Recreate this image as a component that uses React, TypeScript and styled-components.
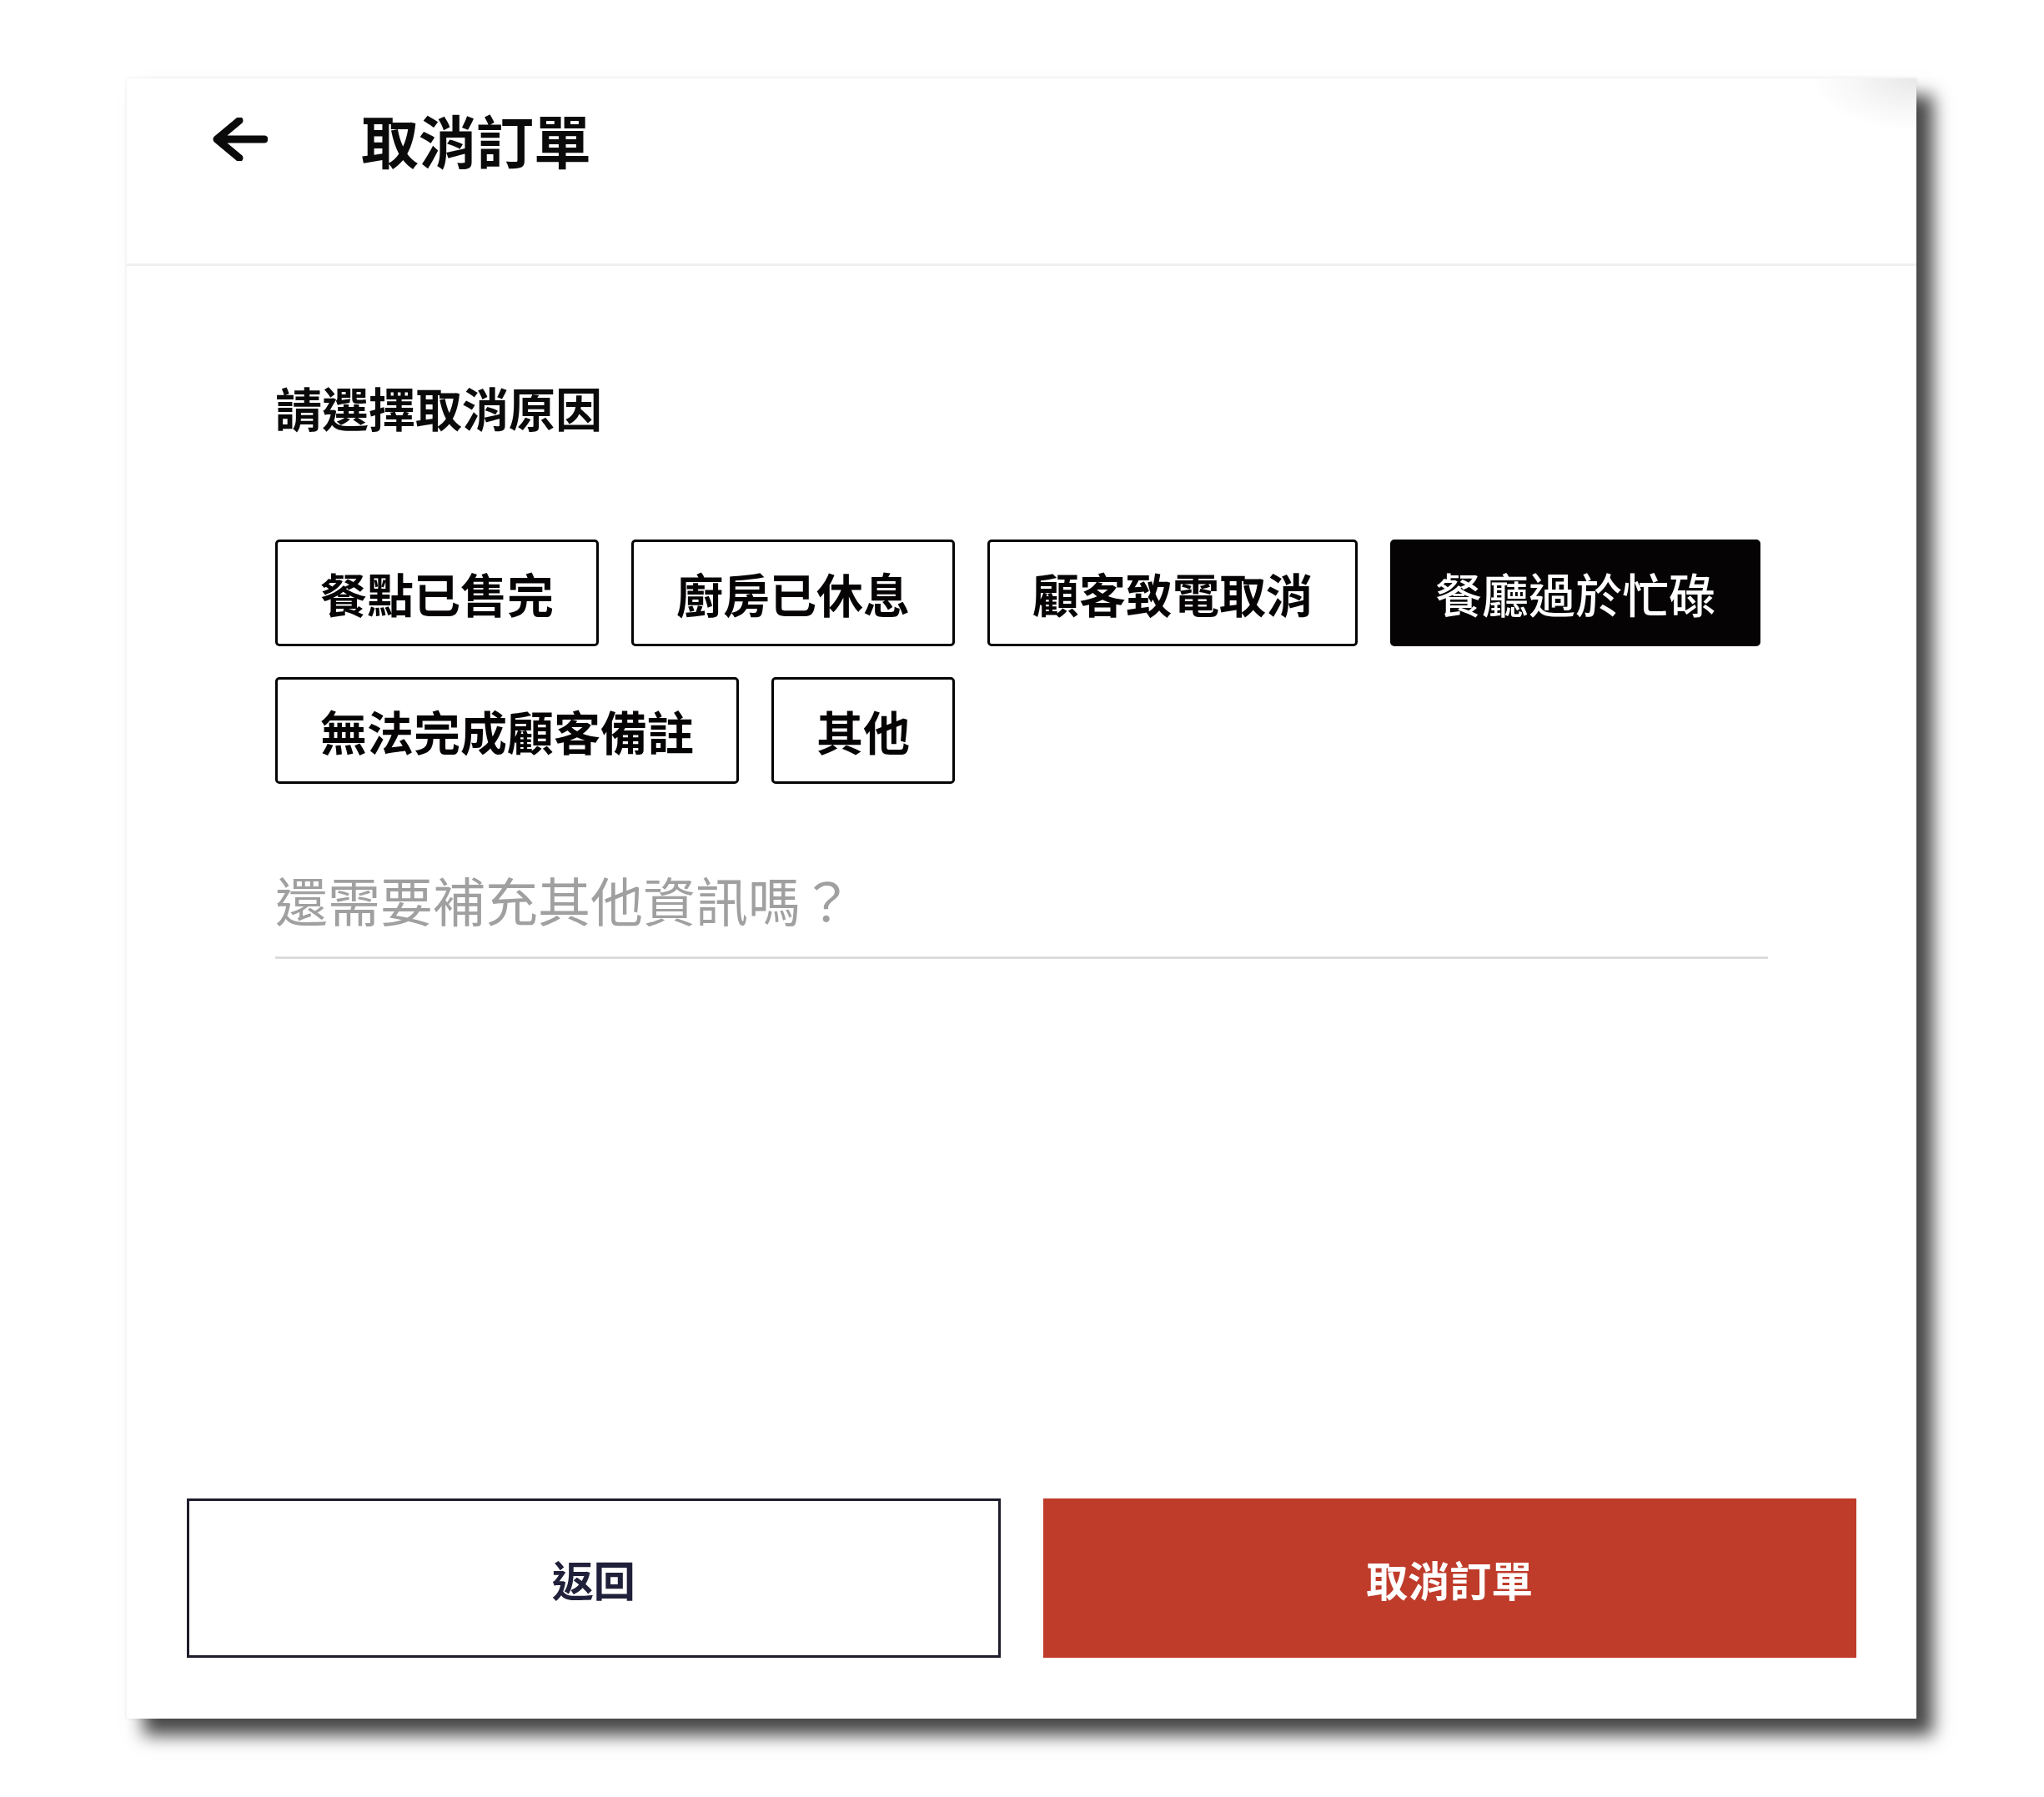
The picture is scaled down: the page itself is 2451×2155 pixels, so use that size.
import React from "react";
import styled, { createGlobalStyle } from "styled-components";

const GlobalStyle = createGlobalStyle`
  html, body {
    margin: 0;
    padding: 0;
    background: #ffffff;
  }
  body {
    font-family: "Noto Sans CJK TC", "Noto Sans", sans-serif;
    color: #0a0a0a;
  }
  * { box-sizing: border-box; }
`;

const Page = styled.div`
  padding: 94px 0 0 152px;
  width: 2451px;
  height: 2155px;
`;

const Card = styled.div`
  position: relative;
  width: 2146px;
  height: 1967px;
  background: #ffffff;
  display: flex;
  flex-direction: column;
  box-shadow: 20px 20px 20px rgba(0, 0, 0, 0.72), 0 0 5px rgba(0, 0, 0, 0.07);

  &::after {
    content: "";
    position: absolute;
    top: 0;
    right: 0;
    width: 120px;
    height: 60px;
    background: radial-gradient(
      ellipse at top right,
      rgba(0, 0, 0, 0.09) 0%,
      rgba(0, 0, 0, 0.03) 45%,
      rgba(0, 0, 0, 0) 75%
    );
    pointer-events: none;
  }
`;

const Header = styled.div`
  height: 225px;
  padding: 33px 0 0 103px;
  display: flex;
  align-items: flex-start;
  border-bottom: 3px solid #f0f0f0;
  flex-shrink: 0;
`;

const HeaderRow = styled.div`
  height: 80px;
  display: flex;
  align-items: center;
  gap: 112px;
`;

const BackIcon = styled.button`
  border: 0;
  background: transparent;
  padding: 0;
  width: 66px;
  height: 52px;
  display: flex;
  cursor: pointer;
`;

const Title = styled.h1`
  margin: 0;
  font-size: 69px;
  line-height: 1;
  font-weight: 700;
  color: #0a0a0a;
`;

const Body = styled.div`
  padding: 141px 178px 0 178px;
  display: flex;
  flex-direction: column;
`;

const SectionTitle = styled.h2`
  margin: 0;
  font-size: 56px;
  line-height: 1;
  font-weight: 700;
  color: #0a0a0a;
`;

const Reasons = styled.div`
  margin-top: 131px;
  display: flex;
  flex-wrap: wrap;
  column-gap: 39px;
  row-gap: 37px;
`;

const Reason = styled.button<{ $selected?: boolean }>`
  font-family: "Noto Sans CJK TC", "Noto Sans", sans-serif;
  font-size: 56px;
  line-height: 1;
  font-weight: ${(p) => (p.$selected ? 500 : 700)};
  height: 128px;
  padding: 0 51px;
  border: 3px solid #050303;
  border-radius: 5px;
  background: ${(p) => (p.$selected ? "#050303" : "#ffffff")};
  color: ${(p) => (p.$selected ? "#ffffff" : "#050303")};
  white-space: nowrap;
  cursor: pointer;
`;

const NoteInput = styled.input`
  margin-top: 106px;
  width: 1790px;
  font-family: "Noto Sans CJK TC", "Noto Sans", sans-serif;
  font-size: 63px;
  line-height: 1;
  height: 104px;
  padding: 0 0 39px 0;
  border: 0;
  border-bottom: 3px solid #dcdcdc;
  outline: none;
  background: transparent;
  color: #222;

  &::placeholder {
    color: #a0a0a0;
    font-weight: 400;
  }
`;

const Footer = styled.div`
  margin-top: auto;
  padding: 0 72px 73px 72px;
  display: flex;
  gap: 51px;
`;

const FooterButton = styled.button<{ $primary?: boolean }>`
  flex: 1 1 0;
  height: 191px;
  font-family: "Noto Sans CJK TC", "Noto Sans", sans-serif;
  font-size: 50px;
  line-height: 1;
  font-weight: 700;
  border: 3px solid ${(p) => (p.$primary ? "#bf3b2a" : "#1d1d2c")};
  background: ${(p) => (p.$primary ? "#bf3b2a" : "#ffffff")};
  color: ${(p) => (p.$primary ? "#ffffff" : "#20203a")};
  cursor: pointer;
`;

const reasons = [
  "餐點已售完",
  "廚房已休息",
  "顧客致電取消",
  "餐廳過於忙碌",
  "無法完成顧客備註",
  "其他",
];

export default function App() {
  const selected = "餐廳過於忙碌";
  return (
    <>
      <GlobalStyle />
      <Page>
        <Card>
          <Header>
            <HeaderRow>
              <BackIcon aria-label="返回">
                <svg width="66" height="52" viewBox="0 0 66 52" fill="none">
                  <path
                    d="M62 26 H6 M32 3.5 L5 26 L32 48.5"
                    stroke="#0a0a0a"
                    strokeWidth="9"
                    strokeLinecap="round"
                    strokeLinejoin="round"
                  />
                </svg>
              </BackIcon>
              <Title>取消訂單</Title>
            </HeaderRow>
          </Header>
          <Body>
            <SectionTitle>請選擇取消原因</SectionTitle>
            <Reasons>
              {reasons.map((r) => (
                <Reason key={r} $selected={r === selected}>
                  {r}
                </Reason>
              ))}
            </Reasons>
            <NoteInput placeholder="還需要補充其他資訊嗎？" />
          </Body>
          <Footer>
            <FooterButton>返回</FooterButton>
            <FooterButton $primary>取消訂單</FooterButton>
          </Footer>
        </Card>
      </Page>
    </>
  );
}
